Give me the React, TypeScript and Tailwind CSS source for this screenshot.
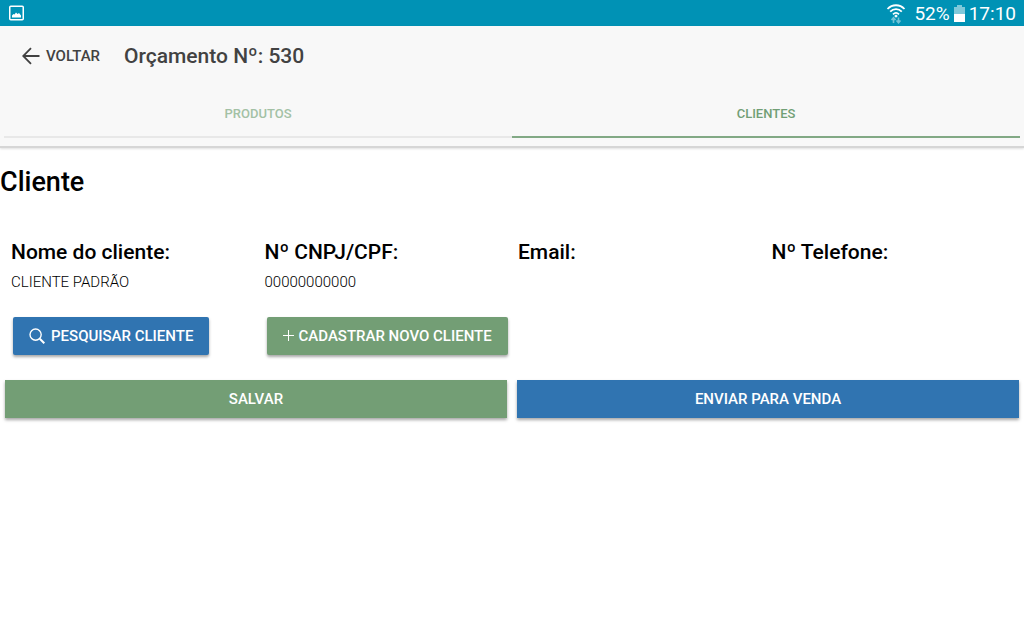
import { useState } from 'react';

const tabs = ['Produtos', 'Clientes'];

const fields = [
  { label: 'Nome do cliente:', value: 'CLIENTE PADRÃO' },
  { label: 'Nº CNPJ/CPF:', value: '00000000000' },
  { label: 'Email:', value: '' },
  { label: 'Nº Telefone:', value: '' },
];

const buttonBase =
  'flex h-[38px] items-center justify-center whitespace-nowrap text-[15px] font-medium uppercase text-white shadow-[0_2px_3px_rgba(0,0,0,0.35)]';

const StatusBar = () => (
  <div className="flex h-[26px] items-center justify-between bg-[#0092b5] px-2 text-white">
    <svg className="h-4 w-4" viewBox="0 0 16 16" fill="none">
      <rect x="1.75" y="1.25" width="13.5" height="13.5" rx="1" stroke="currentColor" strokeWidth="1.5" />
      <path d="M4 12.5V10.5L5.5 9L6.5 9.5L8 7.5L9.5 9L11 8L13 10.5V12.5Z" fill="currentColor" />
    </svg>
    <div className="flex items-center pt-0.5">
      <svg className="mr-2 h-5 w-5" viewBox="0 0 20 20" fill="none" stroke="currentColor" strokeWidth="1.8">
        <path d="M1.5 5C6.2 0 13.8 0 18.5 5" />
        <path d="M4.2 7.7C7.5 4.3 12.5 4.3 15.8 7.7" />
        <path d="M7 10.3C8.8 8.6 11.2 8.6 13 10.3" />
        <path d="M10 10.5L11.8 12.1L10 13.8L8.2 12.1Z" fill="currentColor" stroke="none" />
        <path d="M7.5 19V14M5.5 16L7.5 13.8L9.5 16M12.5 13.5V18.5M10.5 16.5L12.5 18.7L14.5 16.5" opacity="0.45" strokeWidth="1.6" />
      </svg>
      <span className="text-[19px] leading-6">52%</span>
      <svg className="mx-1 h-[18px] w-[11px]" viewBox="0 0 11 18" fill="currentColor">
        <path d="M3 0H8V2H11V9H0V2H3Z" opacity="0.5" />
        <path d="M0 9H11V17H0Z" />
      </svg>
      <span className="text-[19px] leading-6">17:10</span>
    </div>
  </div>
);

const App = () => {
  const [active, setActive] = useState('Clientes');

  return (
    <div className="min-h-screen bg-white font-['Roboto',sans-serif] text-black">
      <StatusBar />

      <header className="border-b-2 border-[#d6d6d6] bg-[#f8f8f8] shadow-[0_1px_2px_rgba(0,0,0,0.12)]">
        <div className="flex h-[60px] items-center px-[22px] text-[#424242]">
          <button className="flex items-center gap-1.5 text-[15px] font-medium uppercase">
            <svg className="h-[18px] w-[18px]" viewBox="0 0 18 18" fill="none" stroke="currentColor" strokeWidth="1.8">
              <path d="M17.5 9H1.5M9 1.2L1.2 9L9 16.8" />
            </svg>
            Voltar
          </button>
          <h1 className="ml-6 pt-0.5 text-[21px] font-medium">Orçamento Nº: 530</h1>
        </div>

        {/* Tabs */}
        <nav className="flex px-1 pb-2">
          {tabs.map((tab) => (
            <button
              key={tab}
              onClick={() => setActive(tab)}
              className={`h-[52px] flex-1 border-b-2 pt-1.5 text-[13px] font-medium uppercase ${
                active === tab ? 'border-[#82a985] text-[#719f75]' : 'border-[#e8e8e8] text-[#a3c1a5]'
              }`}
            >
              {tab}
            </button>
          ))}
        </nav>
      </header>

      <main>
        <h2 className="pt-[18px] text-[27px] leading-8 font-medium">Cliente</h2>

        {/* Client data */}
        <dl className="mt-10 grid grid-cols-4 px-[5px]">
          {fields.map((field) => (
            <div key={field.label} className="h-[79px] px-1.5">
              <dt className="text-[21px] leading-7 font-medium">{field.label}</dt>
              <dd className="mt-1.5 text-[15px] leading-5 font-light">{field.value}</dd>
            </div>
          ))}
        </dl>

        <div className="grid grid-cols-4 px-[5px]">
          <div className="px-2">
            <button className={`${buttonBase} gap-1.5 rounded-[2px] bg-[#3074b1] px-4`}>
              <svg className="h-4 w-4" viewBox="0 0 16 16" fill="none" stroke="currentColor" strokeWidth="1.4">
                <circle cx="6.6" cy="6.6" r="5.6" />
                <path d="M10.8 10.8L15.3 15.3" strokeWidth="2" />
              </svg>
              Pesquisar Cliente
            </button>
          </div>
          <div className="px-2">
            <button className={`${buttonBase} gap-1 rounded-[2px] bg-[#739e75] px-4`}>
              <svg className="h-3 w-3" viewBox="0 0 12 12" fill="none" stroke="currentColor">
                <path d="M5.5 0V11M0 5.5H11" />
              </svg>
              Cadastrar Novo Cliente
            </button>
          </div>
        </div>

        <div className="mt-[25px] grid grid-cols-2 gap-2.5 px-[5px]">
          <button className={`${buttonBase} bg-[#739e75]`}>Salvar</button>
          <button className={`${buttonBase} bg-[#3074b1]`}>Enviar para Venda</button>
        </div>
      </main>
    </div>
  );
};

export default App;
